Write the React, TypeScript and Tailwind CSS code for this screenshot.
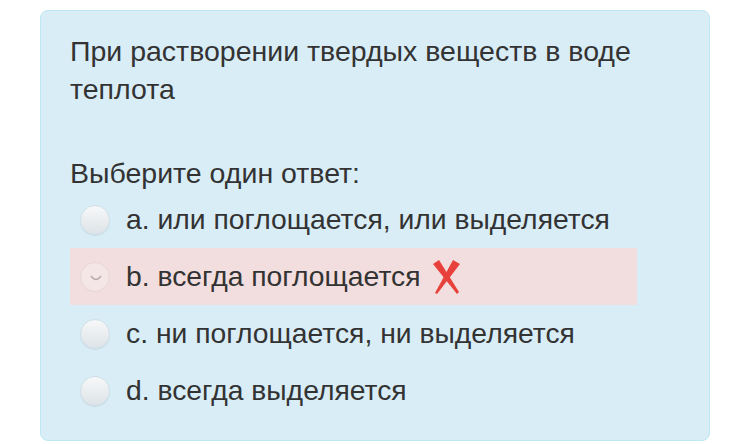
const options = [
  { key: 'a', text: 'или поглощается, или выделяется' },
  { key: 'b', text: 'всегда поглощается', wrong: true },
  { key: 'c', text: 'ни поглощается, ни выделяется' },
  { key: 'd', text: 'всегда выделяется' },
]

function Radio({ checked }: { checked?: boolean }) {
  if (checked) {
    return (
      <span className="relative inline-block w-[30px] h-[30px] shrink-0 rounded-full border border-[#e8d6d6] bg-[#f4e6e6]">
        <svg className="absolute left-[9px] top-[12px]" width="12" height="8" viewBox="0 0 12 8">
          <path d="M1 1 Q6 8 11 1" fill="none" stroke="#b5abab" strokeWidth="1.3" />
        </svg>
      </span>
    )
  }
  return (
    <span className="inline-block w-[30px] h-[30px] shrink-0 rounded-full bg-gradient-to-b from-[#f7f8f9] to-[#dde3e7] shadow-[0_1px_1px_rgba(0,0,0,0.08)] border border-[#cfdfe7]" />
  )
}

function Cross() {
  return (
    <svg width="27" height="34" viewBox="0 0 27 34" className="ml-[12px]">
      <polygon points="0,4 6,0 26,32 24,34" fill="#e8413c" />
      <polygon points="20,0 27,4 4,34 2,33" fill="#e8413c" />
    </svg>
  )
}

export default function App() {
  return (
    <div className="w-[750px] h-[444px] bg-white pt-[10px] pl-[40px]" style={{ fontFamily: '"Liberation Sans", Arial, sans-serif' }}>
      <div className="w-[670px] h-[431px] rounded-[8px] border border-[#bce8f1] bg-[#d9edf7] pl-[29px] pt-[21px] text-[#333333]">
        <div className="text-[28.5px] leading-[38px] w-[600px]">
          При растворении твердых веществ в воде теплота
        </div>
        <div className="text-[28.5px] leading-[38px] mt-[46px]">Выберите один ответ:</div>
        <div className="flex flex-col -mt-[1px] w-[567px]">
          {options.map((o) => (
            <div
              key={o.key}
              className={
                'flex items-center h-[57px] pl-[10px] gap-[16px] text-[28.3px] ' +
                (o.wrong ? 'bg-[#f2dede]' : '')
              }
            >
              <Radio checked={o.wrong} />
              <span className="flex items-center">
                {o.key}. {o.text}
                {o.wrong && <Cross />}
              </span>
            </div>
          ))}
        </div>
      </div>
    </div>
  )
}
